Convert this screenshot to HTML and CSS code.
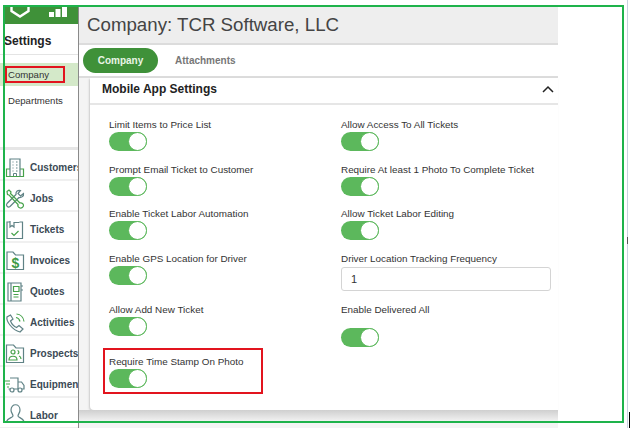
FILE: index.html
```html
<!DOCTYPE html>
<html lang="en">
<head>
<meta charset="utf-8">
<title>Company: TCR Software, LLC</title>
<link rel="stylesheet" href="styles.css">
</head>
<body>
<div class="app">
  <aside class="sidebar">
    <div class="brand">
      <svg class="shield" viewBox="0 0 22 12"><path d="M2.500 0v4l8.500 5.500L19.500 4V0" fill="none" stroke="#fff" stroke-width="2.400"/></svg>
      <svg class="bars" viewBox="0 0 18 10"><rect x="0" y="5" width="5" height="5"/><rect x="6.500" y="2" width="5" height="8"/><rect x="13" y="0" width="5" height="10"/></svg>
    </div>
    <h2 class="side-title">Settings</h2>
    <ul class="side-sub">
      <li class="sub-item is-active">Company</li>
      <li class="sub-item">Departments</li>
    </ul>
    <nav class="nav">
      <a class="nav-row"><svg class="ico" viewBox="0 0 20 20"><path class="g" d="M5 11H1.500v7.500h17V11H15"/><path class="s" d="M5 18.500V1h10v17.500"/><path class="s thin" d="M7.500 4h1M11 4h1.500M7.500 7h1M11 7h1.500M7.500 10h1M11 10h1.500M7.500 13h1M11 13h1.500M8.500 18v-2.500h3V18"/></svg><span>Customers</span></a>
      <a class="nav-row"><svg class="ico" viewBox="0 0 20 20"><path class="s" d="M18.500 4.500l-3 2.500-2.500-2.500 2.500-3c-2.500-.8-5 1-4.500 4L2 14.500c-1.500 2 .8 4.500 3 3l9-9c2.500.5 5-1.500 4.500-4z"/><path class="g" d="M2 2.500l2-1.500 2 2-.5 1.500 9.500 9.500c2-.5 3.500 1 3.500 2.500s-2 3-3.500 2.500-2.500-2-2-3.500L4 6 2.500 5.500z"/></svg><span>Jobs</span></a>
      <a class="nav-row"><svg class="ico" viewBox="0 0 20 20"><path class="s" d="M5 2H2v16.500h15.500V2h-3"/><path class="s" d="M5 1v6l2-1.500L9 7V2.500h5.500"/><path class="g" d="M6.500 13l2.500 2.500 4.500-4.500"/></svg><span>Tickets</span></a>
      <a class="nav-row"><svg class="ico" viewBox="0 0 20 20"><path class="s" d="M2 18.500V1h6l2.500 3h8v14.500z"/><text class="dollar" x="10.500" y="16.500">$</text></svg><span>Invoices</span></a>
      <a class="nav-row"><svg class="ico" viewBox="0 0 20 20"><path class="s" d="M3 1h13v18H3zM6 1v18M16 4h2M16 8h2"/><path class="g" d="M8.500 4.500h5.500v5H8.500zM8.500 12.500h5M8.500 15h5"/></svg><span>Quotes</span></a>
      <a class="nav-row"><svg class="ico" viewBox="0 0 20 20"><path class="s" d="M5.500 2L2 4c-1 4 5 13 13 15l3-3-4-3.500-2.500 2C9 13.500 6.500 10.500 5.500 8L8 6z"/><path class="g" d="M11 4.500c2 .3 3.500 1.800 4 4M11.500 1c4 .3 7 3.500 7.500 7.500"/></svg><span>Activities</span></a>
      <a class="nav-row"><svg class="ico" viewBox="0 0 20 20"><path class="s" d="M1.500 18.500V1h7l2.500 3h7.500v14.500z"/><circle class="g" cx="8" cy="8" r="2"/><path class="g" d="M4 16c0-5 8-5 8 0zM12.500 6.500a1.800 1.800 0 0 1 0 3.500M14 12c1.500.5 2 1.500 2 3"/></svg><span>Prospects</span></a>
      <a class="nav-row"><svg class="ico" viewBox="0 0 20 20"><path class="s" d="M5 3h8v11H9M13 7h3.500l2.500 3.500V14h-2M5 14H3.500"/><circle class="s" cx="7" cy="15" r="2"/><circle class="s" cx="15" cy="15" r="2"/><path class="g" d="M0 6h5M1 9h4M2 12h2"/></svg><span>Equipment</span></a>
      <a class="nav-row"><svg class="ico" viewBox="0 3 20 20"><path class="s" d="M6 7c0-7 9-7 9 0 0 3-2 4-2 6 0 1.500 5 2 6 5.500H1.500C2.500 15 8 14.500 8 13c0-2-2-3-2-6z"/></svg><span>Labor</span></a>
    </nav>
  </aside>

  <main class="main">
    <header class="page-head"><h1 class="page-title">Company: TCR Software, LLC</h1></header>
    <div class="tabs">
      <span class="tab is-on">Company</span>
      <span class="tab">Attachments</span>
    </div>
    <div class="content">
      <section class="card">
        <div class="card-head">
          <h3 class="card-title">Mobile App Settings</h3>
          <svg class="chev" viewBox="0 0 12 8"><path d="M1 7l5-5 5 5" fill="none" stroke="#222" stroke-width="1.500"/></svg>
        </div>
        <div class="fields">
          <div class="field"><label class="lbl">Limit Items to Price List</label><span class="toggle"></span></div>
          <div class="field"><label class="lbl">Allow Access To All Tickets</label><span class="toggle"></span></div>
          <div class="field"><label class="lbl">Prompt Email Ticket to Customer</label><span class="toggle"></span></div>
          <div class="field"><label class="lbl">Require At least 1 Photo To Complete Ticket</label><span class="toggle"></span></div>
          <div class="field"><label class="lbl">Enable Ticket Labor Automation</label><span class="toggle"></span></div>
          <div class="field"><label class="lbl">Allow Ticket Labor Editing</label><span class="toggle"></span></div>
          <div class="field"><label class="lbl">Enable GPS Location for Driver</label><span class="toggle"></span></div>
          <div class="field"><label class="lbl">Driver Location Tracking Frequency</label><input class="num" type="text" value="1"></div>
          <div class="field"><label class="lbl">Allow Add New Ticket</label><span class="toggle"></span></div>
          <div class="field"><label class="lbl">Enable Delivered All</label><span class="toggle toggle-low"></span></div>
          <div class="field is-marked"><label class="lbl">Require Time Stamp On Photo</label><span class="toggle"></span></div>
        </div>
      </section>
      <div class="next-card"></div>
    </div>
  </main>
</div>
<div class="outline"></div>
<div class="edge"></div>
<div class="edge-tick"></div>
<div class="caret"></div>
</body>
</html>
```
FILE: styles.css
```css
*, *::before, *::after { box-sizing: border-box; }
html, body { margin: 0; padding: 0; background: #fff; }
body { position: relative; width: 630px; height: 428px; overflow: hidden; font-family: "Liberation Sans", Arial, sans-serif; color: #333; }
.app { display: flex; width: 630px; height: 428px; padding-top: 5px; overflow: hidden; }

.sidebar { flex: 0 0 79px; height: 423px; border-right: 1px solid #8a8a8a; overflow: hidden; background: #fff; }
.brand { position: relative; height: 19px; margin-left: 3px; background: #3f9139; overflow: hidden; }
.shield { position: absolute; left: 6px; top: 2px; width: 22px; height: 12px; }
.bars { position: absolute; left: 46px; top: 2px; width: 18px; height: 10px; fill: #fff; }
.side-title { height: 31px; margin: 0; padding: 9px 0 0 4px; font-size: 12px; line-height: 16px; font-weight: 700; color: #222; border-bottom: 1px solid #e4e4e4; }
.side-sub { list-style: none; margin: 0; padding: 8px 0 0; height: 95px; border-bottom: 3px solid #e6e6e6; }
.sub-item { height: 23px; padding-left: 8px; font-size: 9.600px; line-height: 24px; color: #333; margin-bottom: 3px; }
.is-active { background: #d4e9c9; position: relative; }
.is-active::after { content: ""; position: absolute; left: 5px; top: 3px; width: 60px; height: 17px; border: 2px solid #e2141e; }
.nav { display: flex; flex-direction: column; }
.nav-row { display: flex; align-items: center; gap: 5px; height: 31px; padding: 6px 0 0 5px; border-bottom: 2px solid #f0f0f0; font-size: 10px; font-weight: 700; color: #3b4a55; white-space: nowrap; }
.ico { flex: 0 0 20px; width: 20px; height: 20px; fill: none; overflow: visible; }
.s { stroke: #5f8285; stroke-width: 1.200; fill: none; }
.thin { stroke-width: 1; }
.g { stroke: #46a24a; stroke-width: 1.200; fill: none; }
.dollar { font-family: "Liberation Sans", Arial, sans-serif; font-size: 14px; font-weight: 700; fill: #3d9a45; text-anchor: middle; }

.main { flex: 0 0 479px; display: flex; flex-direction: column; height: 423px; background: #fff; }
.page-head { height: 40px; padding: 2px 0 0 8px; background: #eee; border-bottom: 2px solid #dcdcdc; }
.page-title { margin: 0; padding-top: 4px; font-size: 18.700px; line-height: 28px; font-weight: 400; color: #444; }
.tabs { display: flex; align-items: flex-start; height: 33px; padding: 3px 0 0 4px; border-bottom: 2px solid #dcdcdc; }
.tab { height: 25px; padding: 0 16px; font-size: 10px; line-height: 25px; font-weight: 700; color: #777; }
.tab.is-on { width: 75px; padding: 0; margin-right: 1px; text-align: center; border-radius: 13px; background: #3f9139; color: #e9f5e6; }
.content { flex: 1; padding-left: 11px; background: #f4f4f4; }
.card { height: 332px; background: #fff; border-radius: 0 0 0 4px; box-shadow: -1px 1px 2px #ccc; }
.card-head { display: flex; align-items: center; justify-content: space-between; height: 27px; padding: 0 4px 3px 12px; border-bottom: 2px solid #e6e6e6; }
.card-title { margin: 0; font-size: 12px; font-weight: 700; color: #222; }
.chev { width: 12px; height: 8px; }
.fields { display: grid; grid-template-columns: 232px 210px; grid-template-rows: 45px 44px 45px 51px 52px auto; padding: 11px 0 0 19px; }
.field { position: relative; }
.lbl { display: block; height: 16px; font-size: 9.900px; line-height: 18px; color: #333; }
.toggle { display: block; position: relative; width: 38px; height: 19px; border-radius: 10px; background: #5cb85c; }
.toggle::after { content: ""; position: absolute; right: 0; top: 0; width: 19px; height: 19px; border-radius: 50%; background: #fff; border: 1.500px solid #5cb85c; }
.toggle-low { margin-top: 11px; }
.num { display: block; width: 210px; height: 24px; padding: 0 9px; margin: 1px 0 0; border: 1px solid #d4d4d4; border-radius: 3px; font: 11px "Liberation Sans", Arial, sans-serif; color: #333; background: #fff; }
.is-marked::after { content: ""; position: absolute; left: -6px; top: -5px; width: 160px; height: 46px; border: 2px solid #e2141e; }
.next-card { height: 15px; background: linear-gradient(#cfcfcf, #f4f4f4 80%); margin-left: -11px; }

.outline { position: absolute; left: 3px; top: 5px; width: 621px; height: 418px; border: 2px solid #1eb34b; }
.edge { position: absolute; left: 627px; top: 0; width: 1px; height: 428px; background: #c8d2e0; }
.edge-tick { position: absolute; left: 627px; top: 237px; width: 1px; height: 7px; background: #555; }
.caret { position: absolute; left: 629px; top: 412px; width: 1px; height: 16px; background: #000; }
```
